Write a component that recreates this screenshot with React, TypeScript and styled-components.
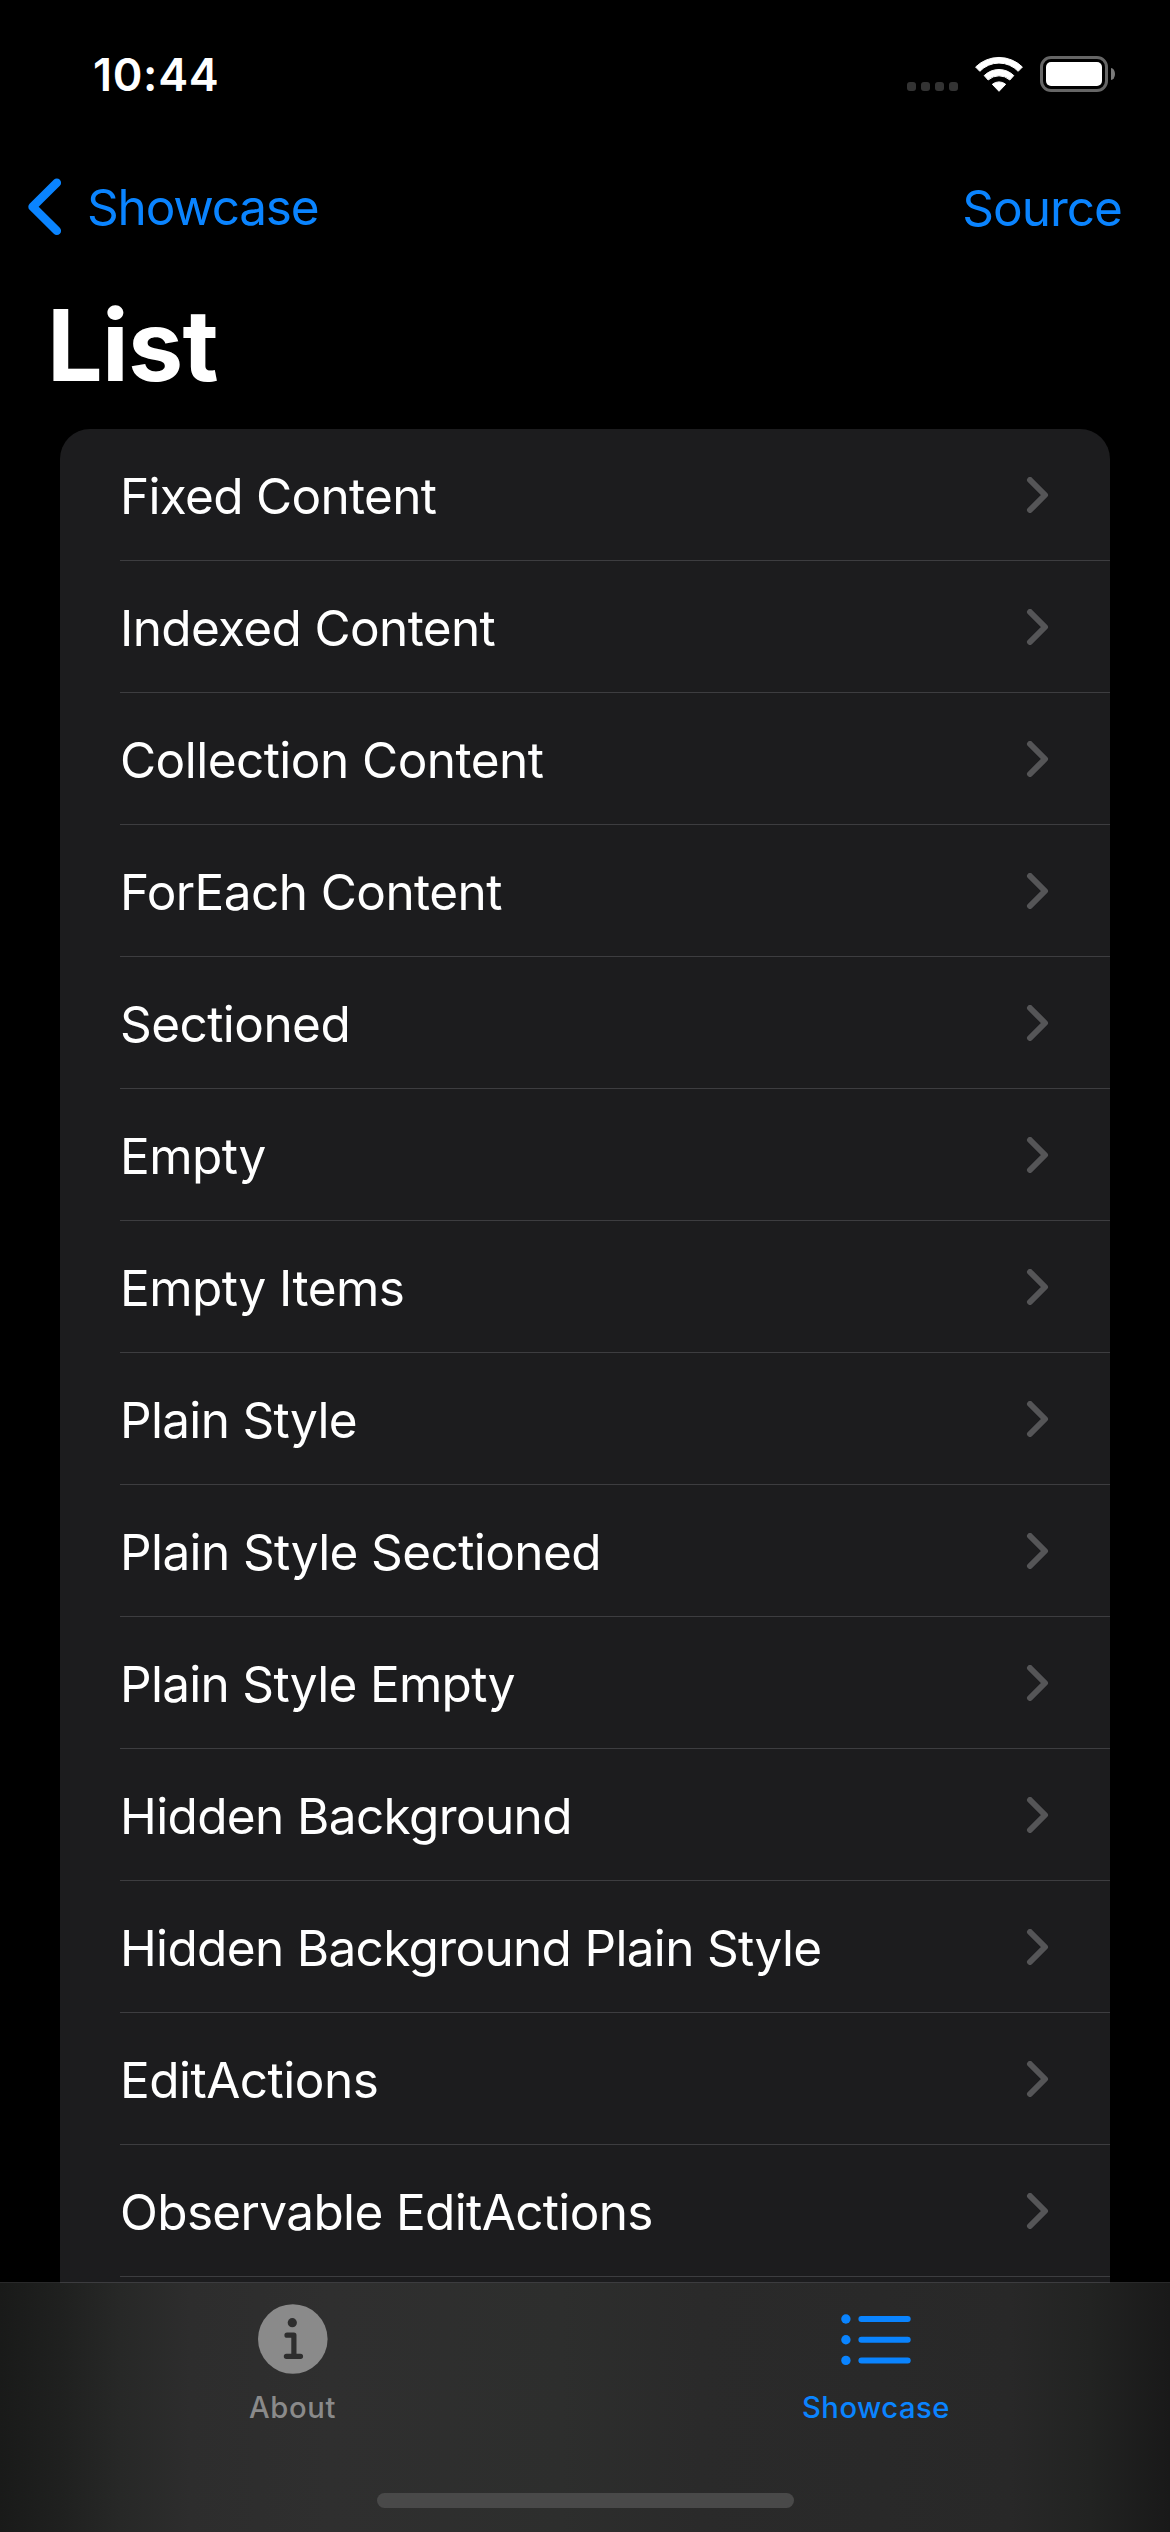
import React from "react";
import styled, { createGlobalStyle } from "styled-components";

const BLUE = "#0a84ff";
const GRAY = "#8a8a8a";

const GlobalStyle = createGlobalStyle`
  html, body {
    margin: 0;
    padding: 0;
    background: #000;
  }
  * {
    box-sizing: border-box;
  }
`;

const Screen = styled.div`
  display: flex;
  flex-direction: column;
  width: 1170px;
  height: 2532px;
  overflow: hidden;
  background: #000;
  color: #fff;
  font-family: "Inter", "Liberation Sans", sans-serif;
  white-space: nowrap;
`;

const StatusBar = styled.header`
  display: flex;
  justify-content: space-between;
  align-items: flex-start;
  flex: none;
  height: 177px;
  padding: 47px 55px 0 93px;
`;

const Clock = styled.time`
  font-size: 45px;
  font-weight: 600;
  line-height: 55px;
  letter-spacing: 0.7px;
`;

const StatusIcons = styled.div`
  display: flex;
  align-items: flex-start;
  padding-top: 8px;
`;

const CellularDots = styled.div`
  display: flex;
  gap: 5px;
  padding-top: 27px;
  margin-right: 16px;
`;

const CellularDot = styled.i`
  width: 9px;
  height: 9px;
  border-radius: 3px;
  background: #333;
`;

const Battery = styled.div`
  display: flex;
  align-items: center;
  margin: 1px 0 0 16px;
`;

const BatteryShell = styled.div`
  width: 68px;
  height: 36px;
  padding: 3px;
  border: 3px solid #666;
  border-radius: 11px;
`;

const BatteryCharge = styled.div`
  height: 100%;
  border-radius: 5px;
  background: #fff;
`;

const BatteryCap = styled.div`
  width: 4px;
  height: 12px;
  margin-left: 3px;
  border-radius: 0 4px 4px 0 / 0 6px 6px 0;
  background: #7a7a7a;
`;

const NavBar = styled.nav`
  display: flex;
  justify-content: space-between;
  align-items: flex-start;
  flex: none;
  height: 108px;
  padding: 0 48px 0 28px;
  color: ${BLUE};
  font-size: 49.5px;
  line-height: 60px;
`;

const BackButton = styled.a`
  display: flex;
  gap: 25px;
  letter-spacing: -1.2px;
`;

const SourceButton = styled.a`
  padding-top: 1px;
  letter-spacing: -0.97px;
`;

const Title = styled.h1`
  flex: none;
  height: 144px;
  margin: 0;
  padding-left: 47px;
  font-size: 98.6px;
  font-weight: 700;
  line-height: 120px;
  letter-spacing: -0.7px;
`;

const Card = styled.ul`
  flex: 1;
  min-height: 0;
  margin: 0 60px;
  padding: 0 0 0 60px;
  border-radius: 30px 30px 0 0;
  background: #1c1c1e;
  list-style: none;
`;

const Row = styled.li`
  display: flex;
  justify-content: space-between;
  height: 132px;
  padding: 37px 60px 0 0;
  border-bottom: 1px solid #3d3d40;
`;

const RowLabel = styled.span<{ $tracking: number }>`
  font-size: 49.5px;
  line-height: 60px;
  letter-spacing: ${(p) => p.$tracking}px;
`;

const Disclosure = styled.svg`
  display: block;
  width: 24px;
  height: 36px;
  margin-top: 11px;
`;

const TabBar = styled.footer`
  flex: none;
  height: 250px;
  background: linear-gradient(
    90deg,
    #191a19 0,
    #1f201f 60px,
    #272827 120px,
    #2d2d2d 190px,
    #2f2f2f 330px,
    #2d2e2d 560px,
    #2a2a2a 700px,
    #292929 880px,
    #282828 1010px,
    #222322 1090px,
    #191919 1170px
  );
`;

const Hairline = styled.div`
  height: 1px;
  background: linear-gradient(
    90deg,
    #29292a 60px,
    #3c3c3f 60px,
    #3c3c3f 1110px,
    #29292a 1110px
  );
`;

const Tabs = styled.div`
  display: grid;
  grid-template-columns: 1fr 1fr;
  height: 210px;
`;

const Tab = styled.a<{ $color: string; $tracking: number; $shift?: number }>`
  display: flex;
  flex-direction: column;
  align-items: center;
  gap: 16px;
  padding: 21px ${(p) => p.$shift ?? 0}px 0 0;
  color: ${(p) => p.$color};
  font-size: 29.2px;
  font-weight: 500;
  line-height: 35px;
  letter-spacing: ${(p) => p.$tracking}px;
`;

const HomeIndicator = styled.div`
  width: 417px;
  height: 15px;
  margin: 0 auto;
  border-radius: 8px;
  background: #494949;
`;

const rows: { label: string; tracking: number }[] = [
  { label: "Fixed Content", tracking: -0.7 },
  { label: "Indexed Content", tracking: -0.64 },
  { label: "Collection Content", tracking: -0.54 },
  { label: "ForEach Content", tracking: -0.58 },
  { label: "Sectioned", tracking: -0.56 },
  { label: "Empty", tracking: -0.55 },
  { label: "Empty Items", tracking: -0.55 },
  { label: "Plain Style", tracking: -0.68 },
  { label: "Plain Style Sectioned", tracking: -0.6 },
  { label: "Plain Style Empty", tracking: -0.7 },
  { label: "Hidden Background", tracking: -0.63 },
  { label: "Hidden Background Plain Style", tracking: -0.67 },
  { label: "EditActions", tracking: -0.51 },
  { label: "Observable EditActions", tracking: -0.64 },
];

const WifiIcon = () => (
  <svg width="50" height="38" viewBox="0 0 50 38" fill="#fff" stroke="#fff" strokeWidth="1" strokeLinejoin="round">
    <path d="M1.6 12 A33.4 33.4 0 0 1 48.4 12 L44.2 16.3 A26.5 26.5 0 0 0 5.8 16.3 Z" />
    <path d="M10.2 20.6 A21 21 0 0 1 39.8 20.6 L35.8 25 A16 16 0 0 0 14.2 25 Z" />
    <path d="M18.3 29.3 A10.5 10.5 0 0 1 31.7 29.3 L25 36.3 Z" />
  </svg>
);

const BackChevron = () => (
  <svg width="34" height="60" viewBox="0 0 34 60" fill="none">
    <path
      d="M28.8 5.7 L4.6 29.7 L28.8 53.7"
      stroke={BLUE}
      strokeWidth="8.6"
      strokeLinecap="round"
      strokeLinejoin="round"
    />
  </svg>
);

const RowChevron = () => (
  <Disclosure viewBox="0 0 24 36" fill="none">
    <path
      d="M4 3 L19 18 L4 33"
      stroke="#555557"
      strokeWidth="6"
      strokeLinecap="round"
      strokeLinejoin="round"
    />
  </Disclosure>
);

const InfoIcon = () => (
  <svg width="70" height="70" viewBox="0 0 70 70" fill="none">
    <circle cx="34.8" cy="35" r="34.8" fill={GRAY} />
    <circle cx="34.3" cy="18.7" r="4.6" fill="#2e2e2e" />
    <path
      d="M29 31.2 H35.9 V52.3 M28.4 52.3 H42.5"
      stroke="#2e2e2e"
      strokeWidth="5.2"
      strokeLinecap="round"
      strokeLinejoin="round"
    />
  </svg>
);

const ListIcon = () => (
  <svg width="70" height="70" viewBox="0 0 70 70">
    {[15, 35.7, 56.4].map((y) => (
      <g key={y}>
        <circle cx="4.9" cy={y} r="4.7" fill={BLUE} />
        <line x1="20.4" x2="66.7" y1={y} y2={y} stroke={BLUE} strokeWidth="6" strokeLinecap="round" />
      </g>
    ))}
  </svg>
);

export default function App() {
  return (
    <>
      <GlobalStyle />
      <Screen>
        <StatusBar>
          <Clock>10:44</Clock>
          <StatusIcons>
            <CellularDots>
              <CellularDot />
              <CellularDot />
              <CellularDot />
              <CellularDot />
            </CellularDots>
            <WifiIcon />
            <Battery>
              <BatteryShell>
                <BatteryCharge />
              </BatteryShell>
              <BatteryCap />
            </Battery>
          </StatusIcons>
        </StatusBar>
        <NavBar>
          <BackButton>
            <BackChevron />
            Showcase
          </BackButton>
          <SourceButton>Source</SourceButton>
        </NavBar>
        <Title>List</Title>
        <Card>
          {rows.map((row) => (
            <Row key={row.label}>
              <RowLabel $tracking={row.tracking}>{row.label}</RowLabel>
              <RowChevron />
            </Row>
          ))}
        </Card>
        <TabBar>
          <Hairline />
          <Tabs>
            <Tab $color={GRAY} $tracking={0.65}>
              <InfoIcon />
              About
            </Tab>
            <Tab $color={BLUE} $tracking={0.53} $shift={3}>
              <ListIcon />
              Showcase
            </Tab>
          </Tabs>
          <HomeIndicator />
        </TabBar>
      </Screen>
    </>
  );
}
